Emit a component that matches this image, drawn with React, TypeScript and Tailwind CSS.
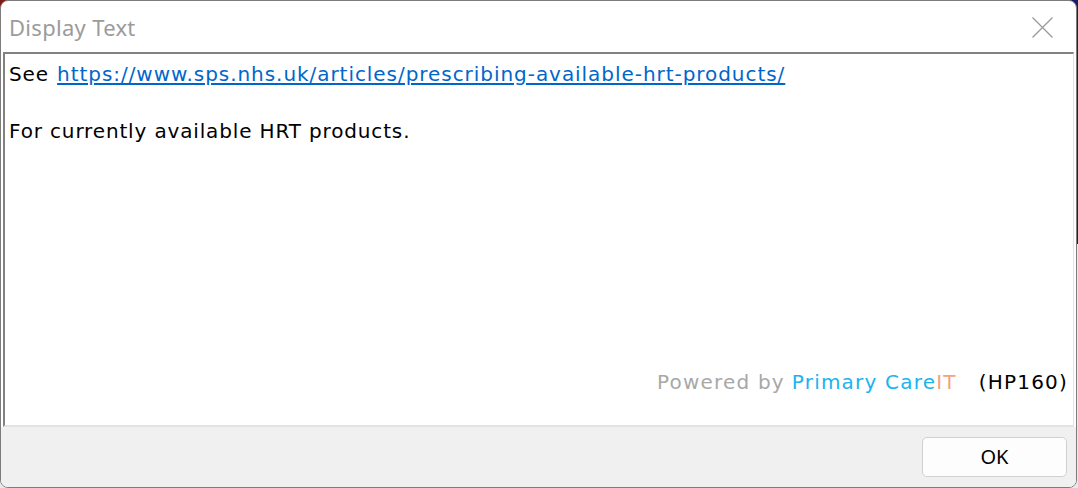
export default function App() {
  return (
    <div className="w-[1078px] h-[488px] bg-[linear-gradient(to_bottom,transparent_50%,#e6eaf0_50%),linear-gradient(to_right,#7e1717_50%,#141d66_50%)]">
      <div className="w-[1077px] h-[488px] flex flex-col bg-white border border-[#7c7c7c] rounded-[8px] overflow-hidden">
        <div className="h-[51px] flex items-center justify-between pl-[8px] pr-[23px] shrink-0">
          <span className="text-[22px] tracking-[0.3px] text-[#9b9b9b] font-['Noto_Sans',sans-serif] mt-[2px]">
            Display Text
          </span>
          <svg width="21" height="21" viewBox="0 0 21 21" className="mt-[1px]">
            <path d="M0.5 0.5L20.5 20.5M20.5 0.5L0.5 20.5" stroke="#9a9a9a" strokeWidth="1.3" />
          </svg>
        </div>

        <div className="mx-[2px] flex-1 flex flex-col border-t-2 border-l-2 border-[#828282] border-r border-r-[#e3e3e3] border-b-2 border-b-[#e3e3e3] font-['DejaVu_Sans',sans-serif] text-[20px] tracking-[0.85px] text-black leading-[28px] px-[4px] pt-[6px] pb-[29px]">
          <p>
            See{' '}
            <a href="#" className="text-[#0066cc] underline underline-offset-2 tracking-[0.95px] ml-[1px]">
              https://www.sps.nhs.uk/articles/prescribing-available-hrt-products/
            </a>
          </p>
          <p className="mt-[29px]">For currently available HRT products.</p>
          <div className="mt-auto flex justify-end pr-[1px] tracking-[1.2px]">
            <span className="text-[#a8a8a8]">Powered by</span>
            <span className="text-[#19b4f0] ml-[7px]">Primary Care</span>
            <span className="text-[#f4a37a]">IT</span>
            <span className="ml-[22px]">(HP160)</span>
          </div>
        </div>

        <div className="h-[60px] shrink-0 bg-[#f0f0f0] flex items-center justify-end pr-[9px]">
          <button className="w-[145px] h-[40px] rounded-[5px] border border-[#d0d0d0] bg-[#fdfdfd] text-[20px] text-black font-['Noto_Sans',sans-serif]">
            OK
          </button>
        </div>
      </div>
    </div>
  )
}
